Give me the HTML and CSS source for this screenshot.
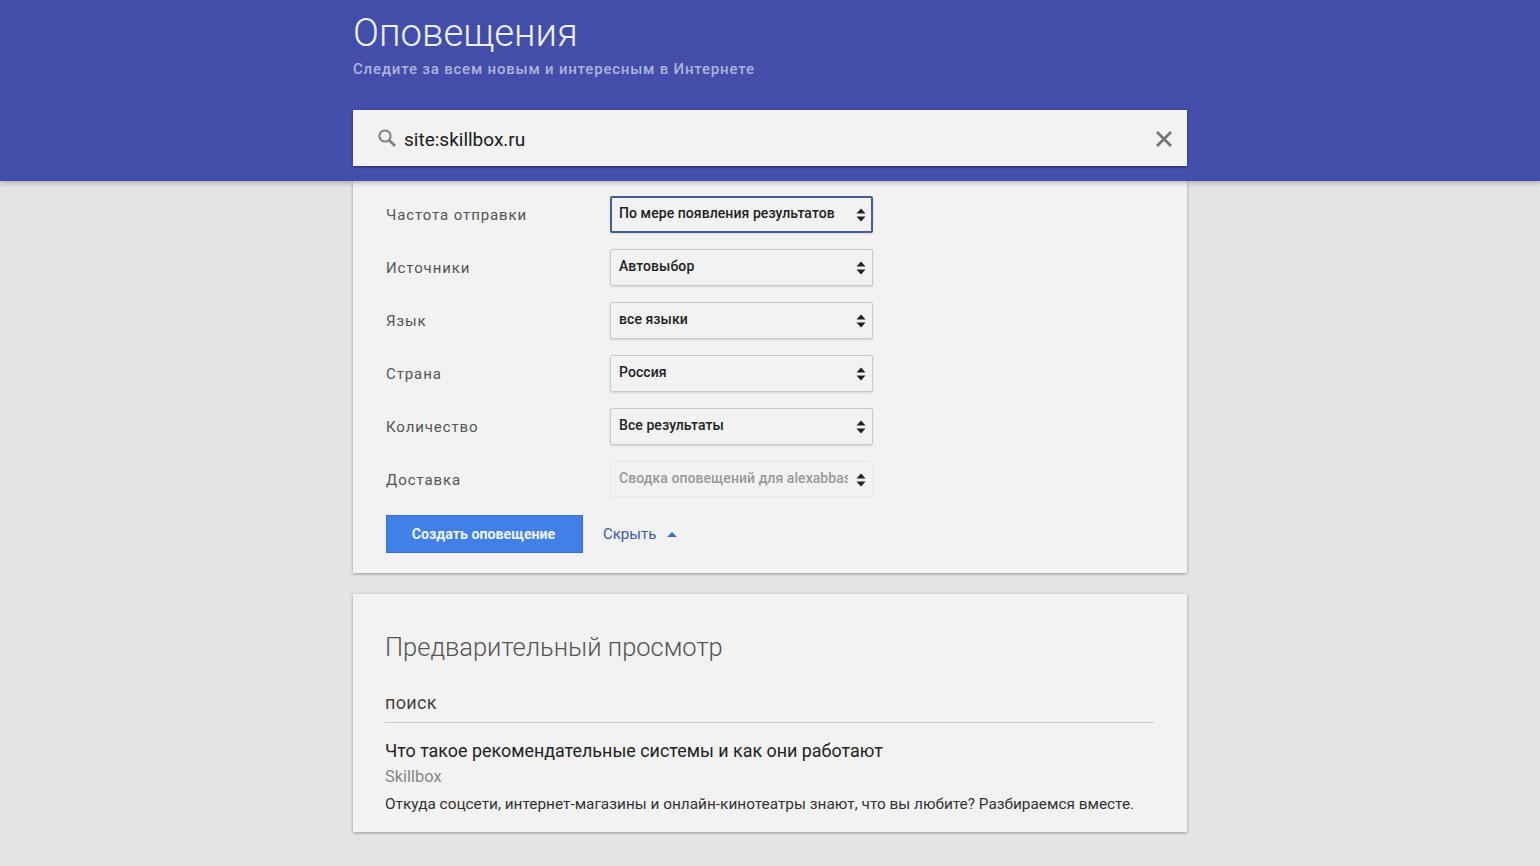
FILE: index.html
```html
<!DOCTYPE html>
<html lang="ru">
<head>
    <meta charset="utf-8">
    <title>Оповещения</title>
    <link rel="stylesheet" href="styles.css">
</head>
<body>
    <header class="top-bar">
        <div class="top-inner">
            <h1 class="page-title">Оповещения</h1>
            <p class="page-sub">Следите за всем новым и интересным в Интернете</p>
            <div class="search-box">
                <svg class="search-icon" width="20" height="20" viewBox="0 0 20 20"><circle cx="8" cy="8" r="5.6" fill="none" stroke="#808080" stroke-width="2"/><path d="M12 12l6 6" stroke="#808080" stroke-width="2.600"/></svg>
                <span class="search-text">site:skillbox.ru</span>
                <svg class="clear-icon" width="16" height="16" viewBox="0 0 16 16"><path d="M1 1l14 14M15 1L1 15" stroke="#757575" stroke-width="2.800"/></svg>
            </div>
        </div>
    </header>

    <main class="content">
        <section class="card options-card">
            <div class="option-row">
                <span class="option-label">Частота отправки</span>
                <div class="select select-focus"><span class="select-value">По мере появления результатов</span><svg class="arrows" width="10" height="16" viewBox="0 0 10 16"><path d="M5 1.500l4.500 5h-9zM5 14.500L.5 9.500h9z" fill="#222"/></svg></div>
            </div>
            <div class="option-row">
                <span class="option-label">Источники</span>
                <div class="select"><span class="select-value">Автовыбор</span><svg class="arrows" width="10" height="16" viewBox="0 0 10 16"><path d="M5 1.500l4.500 5h-9zM5 14.500L.5 9.500h9z" fill="#222"/></svg></div>
            </div>
            <div class="option-row">
                <span class="option-label">Язык</span>
                <div class="select"><span class="select-value">все языки</span><svg class="arrows" width="10" height="16" viewBox="0 0 10 16"><path d="M5 1.500l4.500 5h-9zM5 14.500L.5 9.500h9z" fill="#222"/></svg></div>
            </div>
            <div class="option-row">
                <span class="option-label">Страна</span>
                <div class="select"><span class="select-value">Россия</span><svg class="arrows" width="10" height="16" viewBox="0 0 10 16"><path d="M5 1.500l4.500 5h-9zM5 14.500L.5 9.500h9z" fill="#222"/></svg></div>
            </div>
            <div class="option-row">
                <span class="option-label">Количество</span>
                <div class="select"><span class="select-value">Все результаты</span><svg class="arrows" width="10" height="16" viewBox="0 0 10 16"><path d="M5 1.500l4.500 5h-9zM5 14.500L.5 9.500h9z" fill="#222"/></svg></div>
            </div>
            <div class="option-row">
                <span class="option-label">Доставка</span>
                <div class="select select-disabled"><span class="select-value">Сводка оповещений для alexabbas</span><svg class="arrows" width="10" height="16" viewBox="0 0 10 16"><path d="M5 1.500l4.500 5h-9zM5 14.500L.5 9.500h9z" fill="#222"/></svg></div>
            </div>
            <div class="actions">
                <button class="create-btn">Создать оповещение</button>
                <span class="hide-link">Скрыть</span>
                <span class="hide-arrow"></span>
            </div>
        </section>

        <section class="card preview-card">
            <h2 class="preview-title">Предварительный просмотр</h2>
            <div class="preview-head">поиск</div>
            <div class="result-title">Что такое рекомендательные системы и как они работают</div>
            <div class="result-source">Skillbox</div>
            <div class="result-text">Откуда соцсети, интернет-магазины и онлайн-кинотеатры знают, что вы любите? Разбираемся вместе.</div>
        </section>
    </main>
</body>
</html>
```

FILE: styles.css
```css
body {
    margin: 0;
    height: 866px;
    overflow: hidden;
    background: #e4e4e4;
    font-family: 'Roboto', sans-serif;
    color: #333;
}

.top-bar {
    height: 181px;
    background: #424eaa;
    box-shadow: 0 2px 5px rgba(0,0,0,0.25);
    position: relative;
    z-index: 2;
}

.top-inner {
    width: 834px;
    margin: 0 auto;
    padding-top: 11px;
}

.page-title {
    margin: 0;
    font-size: 38.3px;
    line-height: 44px;
    font-weight: 300;
    color: #f0f1f8;
}

.page-sub {
    margin: 5px 0 0 0;
    font-size: 15px;
    line-height: 18px;
    font-weight: 500;
    letter-spacing: 0.8px;
    color: #aeb3dc;
}

.search-box {
    margin-top: 32px;
    height: 56px;
    background: #f2f2f2;
    display: flex;
    align-items: center;
    padding: 0 15px 0 24px;
    box-shadow: 0 1px 2px rgba(0,0,0,0.4);
}

.search-text {
    margin-left: 7px;
    margin-top: 2px;
    flex: 1;
    font-size: 19px;
    color: #1a1a1a;
}

.clear-icon {
    margin-top: 2px;
}

.content {
    width: 834px;
    margin: 0 auto;
}

.card {
    background: #f2f2f2;
    box-shadow: 0 1px 3px rgba(0,0,0,0.35);
}

.options-card {
    height: 392px;
    box-sizing: border-box;
    padding: 15px 33px 0 33px;
}

.option-row {
    display: flex;
    align-items: center;
    height: 37px;
    margin-bottom: 16px;
}

.option-label {
    width: 224px;
    font-size: 15px;
    letter-spacing: 0.9px;
    color: #555;
}

.select {
    width: 263px;
    height: 37px;
    box-sizing: border-box;
    border: 1px solid #c9c9c9;
    border-radius: 2px;
    box-shadow: 0 1px 2px rgba(0,0,0,0.12);
    display: flex;
    align-items: center;
    padding: 0 6px 0 8px;
    background: #f2f2f2;
}

.select-focus {
    border: 2px solid #3f5f95;
    padding: 0 5px 0 7px;
}

.select-value {
    flex: 1;
    font-size: 14px;
    font-weight: 500;
    letter-spacing: 0.07px;
    color: #222;
    white-space: nowrap;
    overflow: hidden;
    margin-right: 8px;
    margin-top: -4px;
}

.select-disabled {
    border-color: #e8e8e8;
    box-shadow: none;
}

.select-disabled .select-value {
    color: #999;
}

.actions {
    display: flex;
    align-items: center;
    margin-top: 17px;
}

.create-btn {
    width: 197px;
    height: 38px;
    border: 1px solid #3a6fc9;
    background: #4180e6;
    color: #f0f4fb;
    font-family: 'Roboto', sans-serif;
    font-size: 14.2px;
    font-weight: 700;
    padding: 0 2px 0 0;
}

.hide-link {
    margin-left: 20px;
    font-size: 15px;
    color: #3b5aa8;
}

.hide-arrow {
    margin-left: 11px;
    border-left: 5px solid transparent;
    border-right: 5px solid transparent;
    border-bottom: 5px solid #3b6fc4;
}

.preview-card {
    margin-top: 21px;
    height: 238px;
    box-sizing: border-box;
    padding: 36px 33px 0 32px;
}

.preview-title {
    margin: 0;
    font-size: 25.5px;
    line-height: 34px;
    font-weight: 300;
    color: #555;
}

.preview-head {
    margin-top: 27px;
    padding-bottom: 7px;
    border-bottom: 1px solid #c9c9c9;
    font-size: 18px;
    line-height: 24px;
    letter-spacing: 0.3px;
    color: #444;
}

.result-title {
    margin-top: 17px;
    font-size: 17.9px;
    line-height: 22px;
    color: #222;
}

.result-source {
    margin-top: 5px;
    font-size: 16.4px;
    line-height: 20px;
    color: #888;
}

.result-text {
    margin-top: 7px;
    font-size: 15.38px;
    line-height: 20px;
    color: #333;
}
```
